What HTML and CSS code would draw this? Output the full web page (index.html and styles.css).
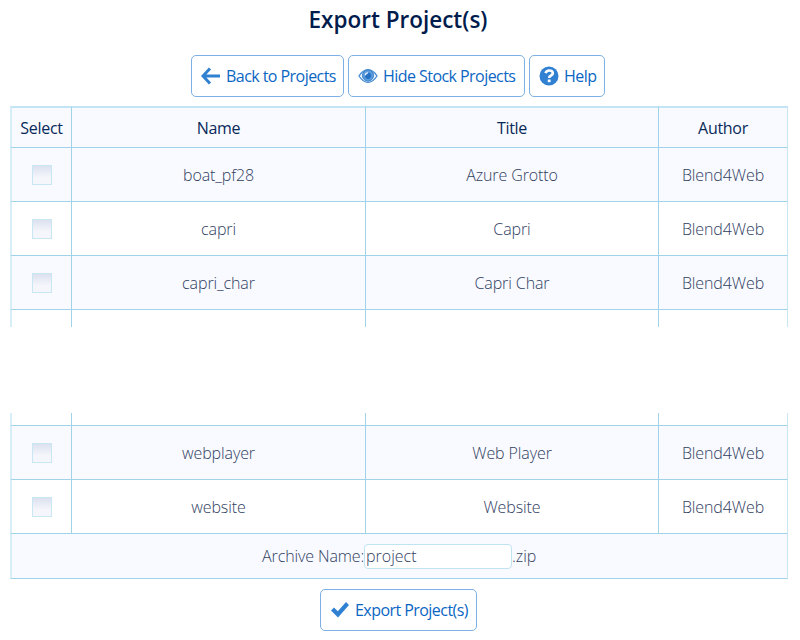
FILE: index.html
```html
<!DOCTYPE html>
<html lang="en">
<head>
<meta charset="utf-8">
<title>Export Project(s)</title>
<link rel="stylesheet" href="styles.css">
</head>
<body>
<h1>Export Project(s)</h1>
<nav class="toolbar">
  <a class="btn back"><svg width="20" height="18" viewBox="0 0 20 18"><path d="M9 1.5 2 9l7 7.5M2.5 9H19" fill="none" stroke="#3181d3" stroke-width="3"/></svg><span>Back to Projects</span></a>
  <a class="btn hide"><svg width="20" height="18" viewBox="0 0 20 18"><path d="M1 9Q5 2.7 10 2.7T19 9Q15 15.3 10 15.3T1 9Z" fill="#f5faff" stroke="#4389cf" stroke-width="1.3"/><circle cx="10" cy="8.5" r="5.6" fill="#5b9bdc" stroke="#3c84cd"/><circle cx="10" cy="8.8" r="3.1" fill="#2671c4"/><path d="M7.3 8.4Q7.5 5.8 10 5.8" fill="none" stroke="#e5f3ff" stroke-width="1.3"/></svg><span>Hide Stock Projects</span></a>
  <a class="btn help"><svg width="20" height="20" viewBox="0 0 20 20"><circle cx="10" cy="10" r="9.5" fill="#3181d3"/><path d="M6.5 7.2Q7.4 4.5 10.2 4.5C14.6 4.5 14.6 8.3 12 9.5Q10.2 10.3 10.2 12" fill="none" stroke="#fff" stroke-width="2.6"/><path d="M8.8 13.5h2.8v2.7H8.8z" fill="#fff"/></svg><span>Help</span></a>
</nav>
<main class="table">
  <div class="row head"><div>Select</div><div>Name</div><div>Title</div><div>Author</div></div>
  <div class="row alt"><div><i class="check"></i></div><div>boat_pf28</div><div>Azure Grotto</div><div>Blend4Web</div></div>
  <div class="row"><div><i class="check"></i></div><div>capri</div><div>Capri</div><div>Blend4Web</div></div>
  <div class="row alt"><div><i class="check"></i></div><div>capri_char</div><div>Capri Char</div><div>Blend4Web</div></div>
  <div class="row cut-top"><div></div><div></div><div></div><div></div></div>
  <div class="gap"></div>
  <div class="row cut-bottom"><div></div><div></div><div></div><div></div></div>
  <div class="row alt"><div><i class="check"></i></div><div>webplayer</div><div>Web Player</div><div>Blend4Web</div></div>
  <div class="row"><div><i class="check"></i></div><div>website</div><div>Website</div><div>Blend4Web</div></div>
  <div class="archive"><label for="archive">Archive Name:</label><input id="archive" type="text" value="project"><span>.zip</span></div>
</main>
<div class="submit"><a class="btn export"><svg width="20" height="18" viewBox="0 0 20 18"><path d="M1 9.5 4 6.5l3.8 3.7L16 1l3 3L8 16.5Z" fill="#3181d3"/></svg><span>Export Project(s)</span></a></div>
</body>
</html>
```
FILE: styles.css
```css
* { box-sizing: border-box; }
body {
  margin: 0;
  height: 640px;
  overflow: hidden;
  background: #fff;
  color: #30405f;
  font: 300 16px/24px "Open Sans", sans-serif;
}
h1 {
  margin: 0;
  padding-top: 5px;
  height: 55px;
  padding-right: 4px;
  text-align: center;
  color: #001c4d;
  font-size: 22.5px;
  line-height: 30px;
  font-weight: 600;
}
.toolbar { display: flex; gap: 4px; margin-left: 191px; height: 51px; }
.btn {
  display: flex;
  align-items: center;
  height: 42px;
  padding: 0 0 1px 9px;
  gap: 5px;
  border: 1px solid #7db0e4;
  border-radius: 5px;
  color: #0b66c3;
  font-weight: 400;
  white-space: nowrap;
}
.btn svg { flex: none; }
.btn span { letter-spacing: -0.55px; }
.back { width: 153px; }
.hide { width: 177px; }
.help { width: 76px; }
.table { width: 778px; margin-left: 10px; }
.row {
  display: grid;
  grid-template-columns: 62px 294px 293px 129px;
  height: 54px;
}
.row > div {
  display: flex;
  align-items: center;
  justify-content: center;
  border-right: 1px solid #a0d3e8;
  border-bottom: 1px solid #a0d3e8;
  letter-spacing: -0.1px;
}
.row > div:first-child { border-left: 2px solid #d7edf8; }
.row > div:last-child { border-right-color: #cae6f3; }
.alt, .head { background: #f8faff; }
.row.head { height: 42px; color: #092958; font-weight: 400; }
.row.head > div { border-top: 2px solid #c3e5f3; letter-spacing: -0.3px; }
.check {
  width: 20px;
  height: 20px;
  border: 1px solid #c9e6f3;
  background: linear-gradient(#dce1ef, #f4f6fb 65%);
}
.row.cut-top { height: 17px; }
.cut-top > div { border-bottom: 0; }
.gap { height: 86px; }
.row.cut-bottom { height: 13px; }
.archive {
  display: flex;
  align-items: center;
  height: 45px;
  padding-left: 250px;
  background: #f8faff;
  border: 1px solid #cae6f3;
  border-top: 0;
  border-left: 2px solid #d7edf8;
  border-bottom-color: #a0d3e8;
}
.archive label { width: 102px; white-space: nowrap; letter-spacing: -0.1px; }
.archive input {
  width: 148px;
  height: 25px;
  padding: 0 1px;
  border: 1px solid #c0e3f2;
  border-radius: 4px;
  background: #fff;
  color: inherit;
  font: inherit;
}
.submit { display: flex; margin: 10px 0 0 320px; }
.export { width: 157px; height: 42px; }
```
